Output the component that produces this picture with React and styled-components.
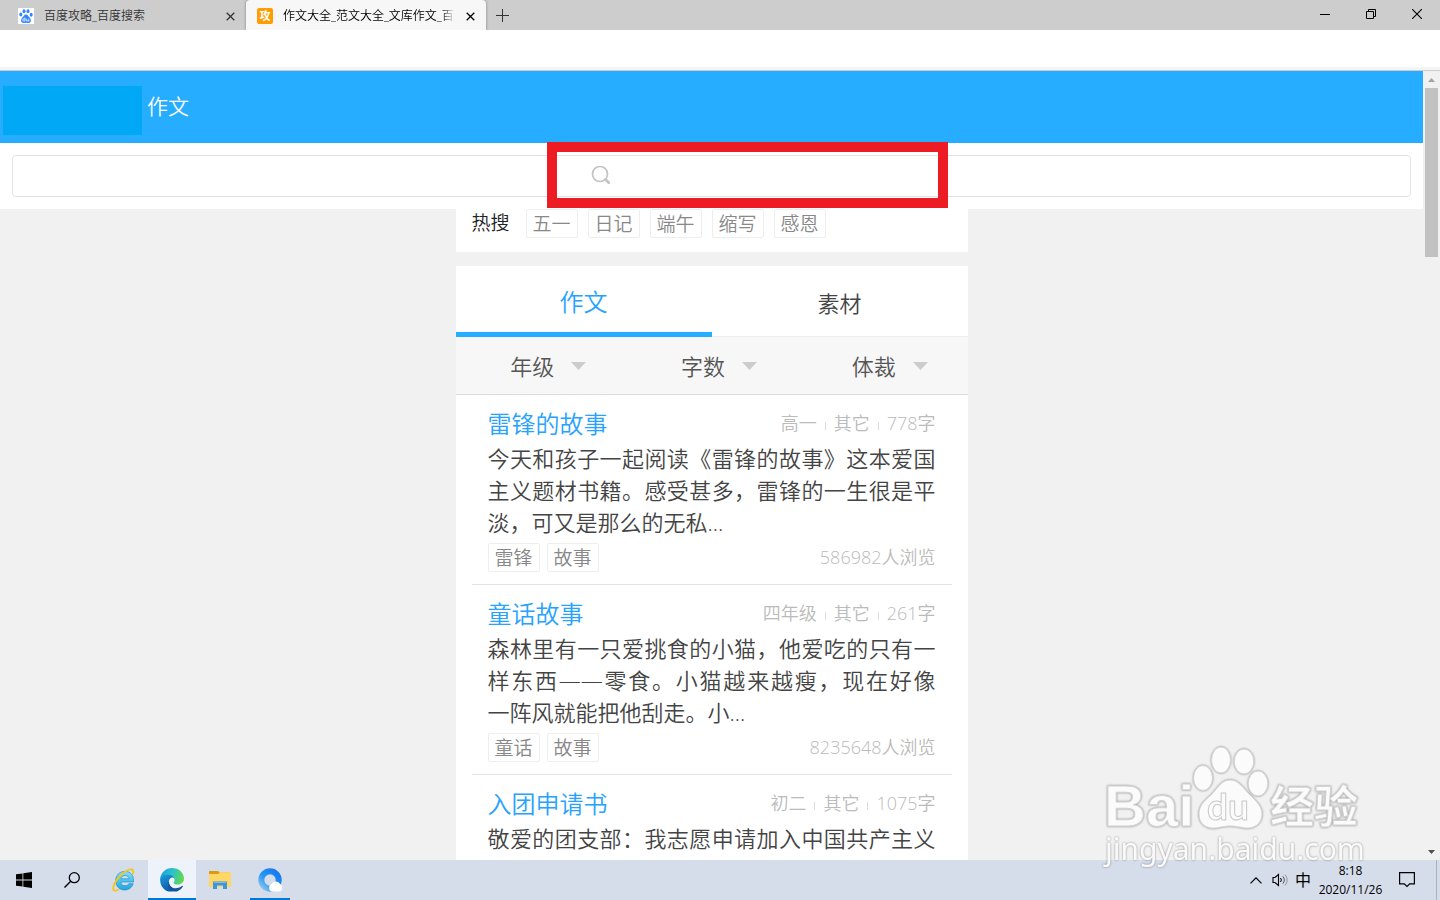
import { useState } from 'react';
import styled, { createGlobalStyle } from 'styled-components';

const hotWords = ['五一', '日记', '端午', '缩写', '感恩'];

const filters = [
    { name: '年级', options: ['小学', '初中', '高中'] },
    { name: '字数', options: ['二百', '五百', '八百'] },
    { name: '体裁', options: ['记叙', '议论', '其它'] },
];

const essays = [
    {
        title: '雷锋的故事',
        meta: ['高一', '其它', '778字'],
        lines: ['今天和孩子一起阅读《雷锋的故事》这本爱国', '主义题材书籍。感受甚多，雷锋的一生很是平', '淡，可又是那么的无私...'],
        tags: ['雷锋', '故事'],
        views: '586982人浏览',
    },
    {
        title: '童话故事',
        meta: ['四年级', '其它', '261字'],
        lines: ['森林里有一只爱挑食的小猫，他爱吃的只有一', '样东西——零食。小猫越来越瘦，现在好像', '一阵风就能把他刮走。小...'],
        tags: ['童话', '故事'],
        views: '8235648人浏览',
    },
    {
        title: '入团申请书',
        meta: ['初二', '其它', '1075字'],
        lines: ['敬爱的团支部：我志愿申请加入中国共产主义', '青年团，坚决拥护中国共产党的领导，遵守团'],
        tags: [],
        views: '',
    },
];

const PawIcon = ({ size = 16 }) => (
    <svg width={size} height={size} viewBox="0 0 16 16">
        <rect width="16" height="16" fill="#fff" />
        <g fill="#3385ff">
            <ellipse cx="2.8" cy="6.6" rx="1.5" ry="2" />
            <ellipse cx="6" cy="3.2" rx="1.5" ry="2" />
            <ellipse cx="10" cy="3.2" rx="1.5" ry="2" />
            <ellipse cx="13.2" cy="6.8" rx="1.5" ry="2" />
            <path d="M8 6.6c-2 0-2.4 2-3.8 3.2C2.600 11.200 2.600 15 5.400 15c1 0 1.600-.3 2.600-.3s1.600.3 2.600.3c2.800 0 2.800-3.800 1.200-5.200C10.400 8.600 10 6.600 8 6.600z" />
        </g>
        <path d="M7 9.500v3.500H5.800a1.100 1.100 0 0 1 0-2.200H7M8.600 10.800V13h2.200v-2.200" fill="none" stroke="#fff" strokeWidth="0.800" />
    </svg>
);

const CloseIcon = () => (
    <svg width="9" height="9" viewBox="0 0 9 9">
        <path d="M.7.7l7.600 7.600M8.300.7L.7 8.300" stroke="currentColor" strokeWidth="1.300" />
    </svg>
);

const WindowsIcon = () => (
    <svg width="16" height="16" viewBox="0 0 16 16">
        <path d="M0 2.300L6.500 1.400v6.200H0zM7.300 1.300L16 0v7.600H7.300zM0 8.400h6.500v6.200L0 13.700zM7.300 8.400H16V16l-8.700-1.300z" fill="#000" />
    </svg>
);

const TaskSearchIcon = () => (
    <svg width="16" height="16" viewBox="0 0 16 16">
        <circle cx="10.300" cy="5.700" r="5" fill="none" stroke="#000" strokeWidth="1.300" />
        <path d="M6.700 9.300L.5 15.500" stroke="#000" strokeWidth="1.400" />
    </svg>
);

const IeIcon = () => (
    <svg width="24" height="24" viewBox="0 0 24 24">
        <defs>
            <linearGradient id="ie" x1="0" y1="0" x2="0" y2="1">
                <stop offset="0" stopColor="#7fe0fb" />
                <stop offset="1" stopColor="#22a4df" />
            </linearGradient>
        </defs>
        <path d="M21.500 14H8.800c.2 2.300 1.800 3.700 4.200 3.700 1.800 0 3.100-.7 3.800-2h4.400c-1.200 3.800-4.300 6.300-8.300 6.300-5.500 0-9.200-3.700-9.200-9.300S7.500 3.400 13 3.400s8.500 3.600 8.500 9zM8.900 10.800h8.300c-.3-2-1.800-3.300-4.100-3.300s-3.800 1.300-4.200 3.300z" fill="url(#ie)" stroke="#2490ca" strokeWidth="0.700" fillRule="evenodd" />
        <path d="M21 5.500c.6-2.200.2-3.500-1.200-4C16.700.4 8.800 5.600 4.500 12.200 1.200 17 .4 21.300 2 22.300c1 .6 2.600.2 4.500-.8" fill="none" stroke="#f4c61d" strokeWidth="1.900" strokeLinecap="round" />
    </svg>
);

const EdgeIcon = () => (
    <svg width="24" height="24" viewBox="0 0 24 24">
        <defs>
            <linearGradient id="edgeTop" x1="0" y1="0.300" x2="1" y2="0.500">
                <stop offset="0" stopColor="#1ba0e4" />
                <stop offset="0.500" stopColor="#2cc3c9" />
                <stop offset="1" stopColor="#65d94c" />
            </linearGradient>
            <linearGradient id="edgeSide" x1="0" y1="0" x2="0.500" y2="1">
                <stop offset="0" stopColor="#1d9bdd" />
                <stop offset="1" stopColor="#0c59a4" />
            </linearGradient>
        </defs>
        <path d="M.1 11C.7 4.800 5.700 0 12 0c6.800 0 12 4.800 12 10.500 0 3.700-2.700 6-6.300 6-2.600 0-4-.9-4-1.800 0-.7.900-1.100.9-2.700 0-2.300-2.300-4.300-5.300-4.300C5.400 7.700 1.500 8.800.1 11z" fill="url(#edgeTop)" />
        <path d="M.1 11c.8-2.200 3.800-4.200 7.800-4.200 3.500 0 5.900 1.500 6.500 3.700-.7-.8-1.900-1.100-3-.7-2.500 1-3.200 3.700-2.200 6.500 1.200 3.400 4.300 5.400 7.800 5.200C11 26.300 0 23 .1 11z" fill="url(#edgeSide)" />
        <path d="M9.200 12c-.9 3.700 1.300 8.200 6.400 8.200 2.900 0 5-1.100 6.400-2.200.6-.4 1.100 0 .7.700-1.200 2-3.300 3.800-5.700 4.700-5.500 1.200-11.300-4.200-7.800-11.400z" fill="#0f549c" />
    </svg>
);

const FolderIcon = () => (
    <svg width="22" height="18" viewBox="0 0 22 18">
        <path d="M0 0h9l1.500 1.500H21V8H0z" fill="#dd9a0c" />
        <path d="M0 3h9.500L11 1.300h11V16H0z" fill="#ffd766" />
        <path d="M4 18v-7.500h14V18h-4v-3.500H8V18z" fill="#3e96d8" />
        <path d="M5 11.500h12" stroke="#74bdf0" />
    </svg>
);

const QQBrowserIcon = () => (
    <svg width="24" height="24" viewBox="0 0 24 24">
        <defs>
            <linearGradient id="qq" x1="1" y1="0" x2="0" y2="1">
                <stop offset="0" stopColor="#1476ee" />
                <stop offset="0.600" stopColor="#2698f7" />
                <stop offset="1" stopColor="#91c6ed" />
            </linearGradient>
        </defs>
        <circle cx="12" cy="12" r="8.700" fill="none" stroke="url(#qq)" strokeWidth="6" />
        <path d="M13.500 23.500a4 4 0 0 1-.2-7.300 5.200 5.200 0 0 1 8.700-.5c2 1.500 2.500 3.600 2 5.500-.4 1.500-1.500 2.300-3 2.300z" fill="#fff" />
    </svg>
);

const Watermark = () => (
    <WatermarkBox>
        <svg width="264" height="126" viewBox="0 0 264 126">
            <g fill="#fbfbfb" stroke="#d2d2d2" strokeWidth="1">
                <text x="1" y="81" fontFamily="'Liberation Sans', sans-serif" fontWeight="700" fontSize="58">Bai</text>
                <ellipse cx="100" cy="33" rx="9.500" ry="12.500" />
                <ellipse cx="118" cy="15" rx="9.500" ry="13" />
                <ellipse cx="141" cy="16.500" rx="9.800" ry="12.500" />
                <ellipse cx="155" cy="38.500" rx="9.800" ry="12.500" />
                <path d="M127 35c-9 0-12 8-19 15-7 6-12 11-12 19 0 11 8 15 17 14 6-1 9-2 14-2s9 1 15 2c9 1 17-4 17-14 0-8-6-13-12-19-7-7-11-15-20-15z" />
                <text x="104" y="75" fontFamily="Lato, sans-serif" fontWeight="700" fontSize="37" stroke="#c9c9c9">du</text>
                <text x="167" y="78" fontFamily="'Noto Sans CJK SC', sans-serif" fontWeight="700" fontSize="44">经验</text>
            </g>
            <text x="2" y="115" fontFamily="'Noto Sans', sans-serif" fontWeight="400" fontSize="30" fill="#fafafa">jingyan.baidu.com</text>
        </svg>
    </WatermarkBox>
);

const App = () => {
    const [tab, setTab] = useState('作文');

    return (
        <Screen>
            <GlobalStyle />
            <TabStrip>
                <BrowserTab>
                    <PawIcon />
                    <TabTitle>百度攻略_百度搜索</TabTitle>
                    <TabClose aria-label="关闭标签页"><CloseIcon /></TabClose>
                </BrowserTab>
                <BrowserTab $active>
                    <Favicon>攻</Favicon>
                    <TabTitle $fade>作文大全_范文大全_文库作文_百度</TabTitle>
                    <TabClose aria-label="关闭标签页"><CloseIcon /></TabClose>
                </BrowserTab>
                <NewTab aria-label="新建标签页">
                    <svg width="13" height="13" viewBox="0 0 13 13"><path d="M6.500 0v13M0 6.500h13" stroke="#333" /></svg>
                </NewTab>
                <WindowButtons>
                    <WindowButton aria-label="最小化">
                        <svg width="10" height="10" viewBox="0 0 10 10"><path d="M0 5.500h10" stroke="#000" /></svg>
                    </WindowButton>
                    <WindowButton aria-label="还原">
                        <svg width="10" height="10" viewBox="0 0 10 10"><path d="M.5 2.500h7v7h-7zM2.500 2.500v-2h7v7h-2" fill="none" stroke="#000" /></svg>
                    </WindowButton>
                    <WindowButton aria-label="关闭">
                        <svg width="10" height="10" viewBox="0 0 10 10"><path d="M0 0l10 10M10 0L0 10" stroke="#000" strokeWidth="1.100" /></svg>
                    </WindowButton>
                </WindowButtons>
            </TabStrip>
            <Toolbar />

            <Viewport>
                <Page>
                    <Header>
                        <HeaderLogo />
                        <HeaderTitle>作文</HeaderTitle>
                    </Header>
                    <SearchBar>
                        <SearchBox>
                            <svg width="20" height="20" viewBox="0 0 20 20">
                                <circle cx="9" cy="8" r="7.500" fill="none" stroke="#c4c4c4" strokeWidth="1.700" />
                                <path d="M14.600 13.600l3.200 3.200" stroke="#c4c4c4" strokeWidth="2.800" strokeLinecap="round" />
                            </svg>
                            <SearchInput type="text" aria-label="搜索作文" />
                        </SearchBox>
                        <Highlight />
                    </SearchBar>

                    <Column>
                        <HotRow>
                            <HotLabel>热搜</HotLabel>
                            <TagList $gap="10px">
                                {hotWords.map(word => <Tag href="#" key={word}>{word}</Tag>)}
                            </TagList>
                        </HotRow>
                        <Tabs>
                            <TabButton $active={tab === '作文'} onClick={() => setTab('作文')}>作文</TabButton>
                            <TabButton $active={tab === '素材'} onClick={() => setTab('素材')}>素材</TabButton>
                        </Tabs>
                        <FilterBar>
                            {filters.map(filter => (
                                <Filter key={filter.name}>
                                    <FilterSelect aria-label={filter.name}>
                                        <option>{filter.name}</option>
                                        {filter.options.map(option => <option key={option}>{option}</option>)}
                                    </FilterSelect>
                                    <svg width="15" height="8" viewBox="0 0 15 8"><path d="M0 0h15L7.500 8z" fill="#ccc" /></svg>
                                </Filter>
                            ))}
                        </FilterBar>
                        <EssayList>
                            {essays.map(essay => (
                                <Essay key={essay.title}>
                                    <EssayHead>
                                        <EssayTitle href="#">{essay.title}</EssayTitle>
                                        <Meta>
                                            {essay.meta.map(item => <MetaItem key={item}>{item}</MetaItem>)}
                                        </Meta>
                                    </EssayHead>
                                    <Summary>
                                        {essay.lines.map(line => <SummaryLine key={line}>{line}</SummaryLine>)}
                                    </Summary>
                                    <EssayFoot>
                                        <TagList $gap="7px">
                                            {essay.tags.map(tag => <Tag href="#" key={tag}>{tag}</Tag>)}
                                        </TagList>
                                        <Views>{essay.views}</Views>
                                    </EssayFoot>
                                </Essay>
                            ))}
                        </EssayList>
                    </Column>
                </Page>
                <Scrollbar>
                    <ScrollArrow><svg width="7" height="4" viewBox="0 0 7 4"><path d="M0 4h7L3.500 0z" fill="#a3a3a3" /></svg></ScrollArrow>
                    <ScrollThumb />
                    <ScrollArrow><svg width="7" height="4" viewBox="0 0 7 4"><path d="M0 0h7L3.500 4z" fill="#505050" /></svg></ScrollArrow>
                </Scrollbar>
            </Viewport>

            <Taskbar>
                <TaskButton aria-label="开始"><WindowsIcon /></TaskButton>
                <TaskButton aria-label="搜索"><TaskSearchIcon /></TaskButton>
                <TaskApps>
                    <TaskButton aria-label="Internet Explorer"><IeIcon /></TaskButton>
                    <TaskButton aria-label="Microsoft Edge" $active><EdgeIcon /></TaskButton>
                    <TaskButton aria-label="文件资源管理器"><FolderIcon /></TaskButton>
                    <TaskButton aria-label="QQ浏览器" $running><QQBrowserIcon /></TaskButton>
                </TaskApps>
                <Tray>
                    <TrayButton aria-label="显示隐藏的图标">
                        <svg width="12" height="7" viewBox="0 0 12 7"><path d="M.5 6.300L6 .8l5.500 5.500" fill="none" stroke="#000" strokeWidth="1.200" /></svg>
                    </TrayButton>
                    <TrayButton aria-label="音量">
                        <svg width="17" height="14" viewBox="0 0 17 14" fill="none">
                            <path d="M1 4.500h2L6.500 1.500v11L3 9.500H1z" stroke="#000" strokeWidth="1.100" />
                            <path d="M8.500 5a3 3 0 0 1 0 4" stroke="#000" />
                            <path d="M10.700 3.300a5 5 0 0 1 0 7.400" stroke="#555" />
                            <path d="M13 1.500a8 8 0 0 1 0 11" stroke="#999" />
                        </svg>
                    </TrayButton>
                    <InputMode>中</InputMode>
                    <Clock>
                        <span>8:18</span>
                        <span>2020/11/26</span>
                    </Clock>
                    <NoticeButton aria-label="通知">
                        <svg width="16" height="16" viewBox="0 0 16 16"><path d="M.6.600h14.800v11.200h-4.700L8 14.500l-2.700-2.700H.6z" fill="none" stroke="#000" strokeWidth="1.200" /></svg>
                    </NoticeButton>
                </Tray>
            </Taskbar>
            <Watermark />
        </Screen>
    );
};

const GlobalStyle = createGlobalStyle`
    * {
        box-sizing: border-box;
    }
    body {
        margin: 0;
        font-family: 'Open Sans', 'Noto Sans CJK SC', sans-serif;
        font-weight: 350;
    }
    button, input, select {
        font: inherit;
        padding: 0;
        border: none;
        background: none;
    }
    a {
        text-decoration: none;
    }
    svg {
        display: block;
        flex: none;
    }
`;

const Screen = styled.div`
    position: relative;
    display: flex;
    flex-direction: column;
    height: 100vh;
    overflow: hidden;
`;

const TabStrip = styled.div`
    display: flex;
    flex: none;
    height: 30px;
    background-color: #cdcdcd;
`;

const BrowserTab = styled.div`
    display: flex;
    align-items: center;
    width: ${props => props.$active ? '240px' : '246px'};
    padding: 2px 10px 0 ${props => props.$active ? '11px' : '18px'};
    border-radius: 4px 4px 0 0;
    color: ${props => props.$active ? '#000' : '#333'};
    background-color: ${props => props.$active ? '#f7f7f7' : 'transparent'};
    box-shadow: ${props => props.$active ? '0 0 3px rgba(0, 0, 0, 0.4)' : 'none'};
`;

const TabTitle = styled.span`
    flex: 1;
    margin-left: 10px;
    overflow: hidden;
    white-space: nowrap;
    font-size: 12px;
    line-height: 28px;
    mask-image: ${props => props.$fade ? 'linear-gradient(to right, #000 92%, transparent)' : 'none'};
`;

const Favicon = styled.span`
    width: 16px;
    height: 16px;
    border-radius: 2px;
    color: white;
    background-color: #ff9c00;
    font-size: 11px;
    font-weight: 700;
    line-height: 16px;
    text-align: center;
`;

const TabClose = styled.button`
    display: flex;
    align-items: center;
    justify-content: center;
    width: 12px;
    height: 28px;
    margin-left: 9px;
    color: inherit;
`;

const NewTab = styled.button`
    display: flex;
    align-items: center;
    justify-content: center;
    width: 32px;
`;

const WindowButtons = styled.div`
    display: flex;
    margin-left: auto;
`;

const WindowButton = styled.button`
    display: flex;
    align-items: center;
    justify-content: center;
    width: 46px;
    height: 28px;
`;

const Toolbar = styled.div`
    flex: none;
    height: 41px;
    border-bottom: 1px solid #ccc;
    background: linear-gradient(to top, #f5f5f5 3px, white 3px);
`;

const Viewport = styled.div`
    display: flex;
    flex: 1;
    min-height: 0;
`;

const Page = styled.main`
    flex: 1;
    min-width: 0;
    overflow: hidden;
    background-color: #f1f1f1;
`;

const Header = styled.header`
    display: flex;
    align-items: center;
    height: 72px;
    padding-left: 3px;
    background-color: #26adff;
`;

const HeaderLogo = styled.div`
    align-self: flex-end;
    width: 139px;
    height: 49px;
    margin: 0 5px 8px 0;
    background-color: #00a8f5;
`;

const HeaderTitle = styled.h1`
    margin: 0;
    padding-bottom: 2px;
    color: white;
    font-size: 21px;
    font-weight: 350;
    line-height: 32px;
`;

const SearchBar = styled.div`
    position: relative;
    padding: 12px;
    background-color: white;
`;

const SearchBox = styled.label`
    display: flex;
    align-items: center;
    justify-content: center;
    height: 42px;
    border: 1px solid #e3e3e3;
    border-radius: 4px;
`;

const SearchInput = styled.input`
    width: 221px;
    height: 32px;
    padding-left: 8px;
    font-size: 19px;
    outline: none;
`;

const Highlight = styled.div`
    position: absolute;
    top: -1px;
    left: calc(50% - 165px);
    width: 401px;
    height: 66px;
    border: 10px solid #ed1c24;
    pointer-events: none;
`;

const Column = styled.div`
    max-width: 512px;
    margin: 0 auto;
`;

const HotRow = styled.div`
    display: flex;
    align-items: flex-start;
    height: 43px;
    margin-bottom: 14px;
    padding: 0 16px;
    background-color: white;
`;

const HotLabel = styled.span`
    margin-right: 16px;
    color: #222;
    font-size: 19px;
    line-height: 28px;
`;

const TagList = styled.div`
    display: flex;
    gap: ${props => props.$gap};
`;

const Tag = styled.a`
    height: 29px;
    padding: 0 6px;
    border: 1px solid #eee;
    border-radius: 2px;
    color: #888;
    font-size: 19px;
    line-height: 28px;
`;

const Tabs = styled.div`
    display: flex;
    height: 71px;
    background-color: white;
`;

const TabButton = styled.button`
    flex: 1;
    padding-top: ${props => props.$active ? '3px' : '2px'};
    border-bottom: ${props => props.$active ? '5px solid #26adff' : '1px solid #eee'};
    color: ${props => props.$active ? '#26a2ff' : '#444'};
    font-size: ${props => props.$active ? '24px' : '22px'};
    cursor: pointer;
`;

const FilterBar = styled.div`
    display: flex;
    height: 58px;
    border-bottom: 1px solid #ddd;
    background-color: #f7f7f7;
`;

const Filter = styled.label`
    display: flex;
    flex: 1;
    align-items: center;
    justify-content: center;
    gap: 16px;
    padding-left: 15px;
`;

const FilterSelect = styled.select`
    appearance: none;
    color: #555;
    font-size: 22px;
    line-height: 32px;
    cursor: pointer;
`;

const EssayList = styled.div`
    padding: 0 16px;
    background-color: white;
`;

const Essay = styled.article`
    padding: 13px 16px 12px;
    border-bottom: 1px solid #e3e3e3;
`;

const EssayHead = styled.div`
    display: flex;
    align-items: flex-start;
    justify-content: space-between;
    margin-bottom: 2px;
`;

const EssayTitle = styled.a`
    color: #26a2ff;
    font-size: 24px;
    line-height: 32px;
`;

const Meta = styled.div`
    display: flex;
    align-items: center;
    color: #bbb;
    font-size: 18px;
    line-height: 30px;
`;

const MetaItem = styled.span`
    display: flex;
    align-items: center;
    & + &::before {
        content: '';
        width: 1px;
        height: 8px;
        margin: 6px 8px 0;
        background-color: #ddd;
    }
`;

const Summary = styled.p`
    margin: 0 0 5px;
    color: #444;
    font-size: 22px;
    line-height: 32px;
`;

const SummaryLine = styled.span`
    display: block;
    text-align: justify;
    text-align-last: justify;
    &:nth-child(3) {
        text-align-last: left;
    }
`;

const EssayFoot = styled.div`
    display: flex;
    align-items: flex-start;
    justify-content: space-between;
    height: 29px;
`;

const Views = styled.span`
    color: #bbb;
    font-size: 18px;
    line-height: 28px;
`;

const Scrollbar = styled.div`
    display: flex;
    flex-direction: column;
    width: 17px;
    background-color: #f1f1f1;
`;

const ScrollArrow = styled.div`
    display: flex;
    align-items: center;
    justify-content: center;
    height: 17px;
    &:last-child {
        margin-top: auto;
    }
`;

const ScrollThumb = styled.div`
    height: 169px;
    margin: 0 2px;
    background-color: #c1c1c1;
`;

const Taskbar = styled.footer`
    display: flex;
    flex: none;
    height: 40px;
    background-color: #d5dcea;
`;

const TaskApps = styled.div`
    display: flex;
    margin-left: 4px;
`;

const TaskButton = styled.button`
    display: flex;
    align-items: center;
    justify-content: center;
    width: 48px;
    height: 40px;
    margin-left: ${props => props.$running ? '2px' : '0'};
    background-color: ${props => props.$active ? '#eef2fa' : 'transparent'};
    box-shadow: ${props => props.$active ? 'inset 0 -2px #0078d7' : 'none'};
    background-image: ${props => props.$running ? 'linear-gradient(#0078d7, #0078d7)' : 'none'};
    background-size: 40px 2px;
    background-position: bottom center;
    background-repeat: no-repeat;
`;

const Tray = styled.div`
    display: flex;
    align-items: center;
    margin-left: auto;
    margin-right: 3px;
    border-right: 1px solid #a9b0bf;
`;

const TrayButton = styled.button`
    display: flex;
    align-items: center;
    justify-content: center;
    width: 24px;
    height: 40px;
`;

const InputMode = styled.span`
    width: 22px;
    font-size: 16px;
    font-weight: 400;
    line-height: 40px;
    text-align: center;
`;

const Clock = styled.div`
    display: flex;
    flex-direction: column;
    width: 73px;
    font-size: 12px;
    font-weight: 400;
    line-height: 19px;
    text-align: center;
`;

const NoticeButton = styled.button`
    display: flex;
    align-items: center;
    justify-content: center;
    width: 40px;
    height: 40px;
    margin-right: 9px;
`;

const WatermarkBox = styled.div`
    position: absolute;
    right: 73px;
    bottom: 29px;
    pointer-events: none;
    filter: drop-shadow(0 0 1px rgba(0, 0, 0, 0.4));
`;

export default App;
